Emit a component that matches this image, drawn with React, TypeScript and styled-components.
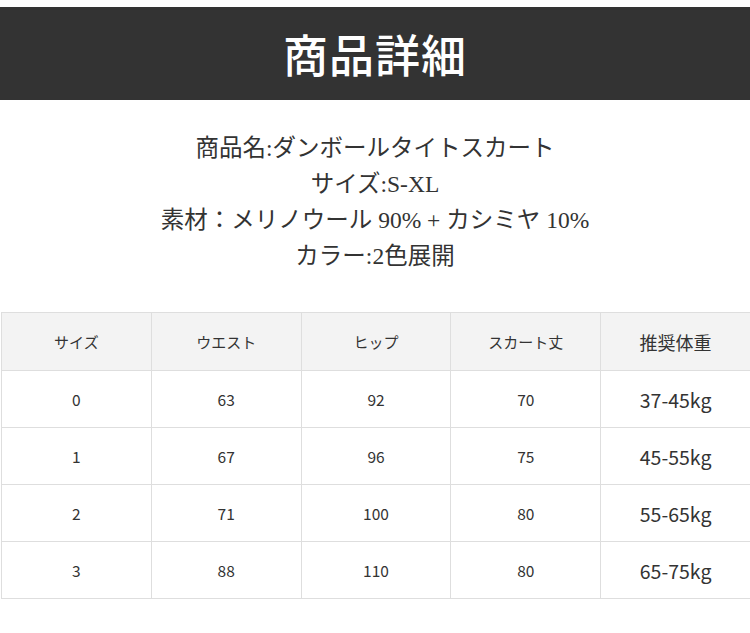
import React from "react";
import styled, { createGlobalStyle } from "styled-components";

const GlobalStyle = createGlobalStyle`
  body {
    margin: 0;
    background: #fff;
    font-family: "Noto Sans CJK JP", "Noto Sans", sans-serif;
  }
`;

const Page = styled.div`
  width: 750px;
  padding-top: 7px;
`;

const TitleBar = styled.div`
  height: 93px;
  background-color: #333333;
  display: flex;
  align-items: center;
  justify-content: center;
`;

const Title = styled.h1`
  margin: 0;
  color: #fff;
  font-family: "Liberation Serif", "Noto Sans CJK JP", serif;
  font-size: 45px;
  font-weight: 500;
  letter-spacing: 1px;
`;

const Info = styled.div`
  margin-top: 30px;
  text-align: center;
  color: #333;
  font-family: "Liberation Serif", "Noto Sans CJK JP", serif;
  font-size: 23.5px;
  line-height: 36px;
`;

const Table = styled.table`
  margin: 38px 0 0 1px;
  width: 750px;
  border-collapse: collapse;
  table-layout: fixed;
`;

const HeadCell = styled.th<{ $big?: boolean }>`
  height: 57px;
  padding: 0;
  background-color: #f3f3f3;
  border: 1px solid #dedede;
  color: #333;
  font-weight: 400;
  font-size: ${(p) => (p.$big ? "18px" : "15px")};
  text-align: center;
`;

const Cell = styled.td<{ $big?: boolean }>`
  height: 56px;
  padding: 0;
  border: 1px solid #dedede;
  color: #333;
  font-size: ${(p) => (p.$big ? "19.5px" : "15.5px")};
  text-align: center;
`;

const heads = ["サイズ", "ウエスト", "ヒップ", "スカート丈", "推奨体重"];
const rows = [
  ["0", "63", "92", "70", "37-45kg"],
  ["1", "67", "96", "75", "45-55kg"],
  ["2", "71", "100", "80", "55-65kg"],
  ["3", "88", "110", "80", "65-75kg"],
];

export default function App() {
  return (
    <Page>
      <GlobalStyle />
      <TitleBar>
        <Title>商品詳細</Title>
      </TitleBar>
      <Info>
        <div>商品名:ダンボールタイトスカート</div>
        <div>サイズ:S-XL</div>
        <div>素材：メリノウール 90% + カシミヤ 10%</div>
        <div>カラー:2色展開</div>
      </Info>
      <Table>
        <thead>
          <tr>
            {heads.map((h, i) => (
              <HeadCell key={h} $big={i === 4}>
                {h}
              </HeadCell>
            ))}
          </tr>
        </thead>
        <tbody>
          {rows.map((r) => (
            <tr key={r[0]}>
              {r.map((c, i) => (
                <Cell key={i} $big={i === 4}>
                  {c}
                </Cell>
              ))}
            </tr>
          ))}
        </tbody>
      </Table>
    </Page>
  );
}
